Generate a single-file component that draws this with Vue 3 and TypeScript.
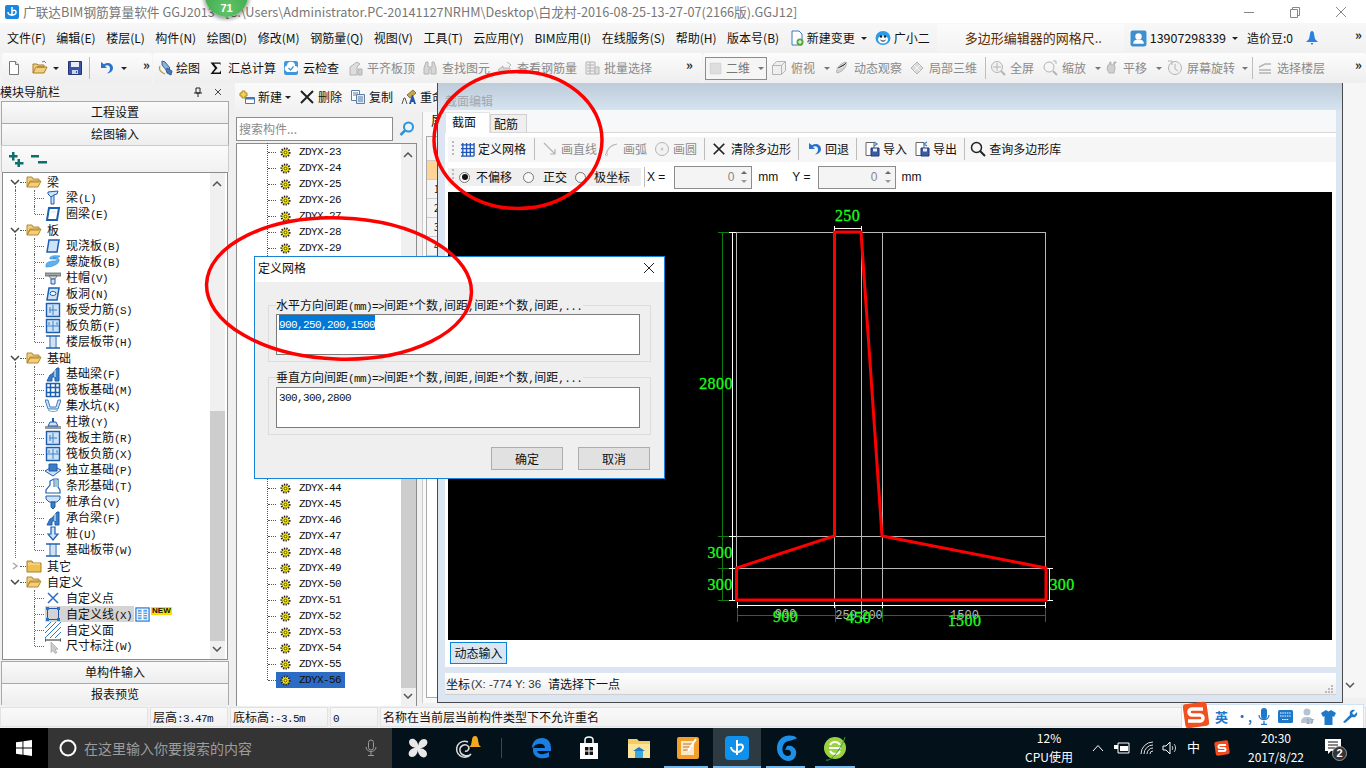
<script setup lang="ts">
import { h } from 'vue'

// icon markup on a 16x16 grid, kept as strings so the rows below stay data only
const B = '#1b5fb0'
const L = '#cfe2f7'
const G = '#b4b4b4'
const icons: Record<string, string> = {
  page: `<path d="M3.5 1.5h6l3 3v10h-9z" fill="#fff" stroke="#777"/><path d="M9.5 1.5v3h3" fill="#eee" stroke="#777"/>`,
  open: `<path d="M1 13V4h4l1 1h6v2H4L1 13h11l3-6H5" fill="#f2cf7a" stroke="#a87c2a"/><path d="M10 2l2-1 2 2" fill="none" stroke="#4a7fc0"/>`,
  save: `<path d="M1.5 1.5h13v13h-13z" fill="#3d55a8" stroke="#24346f"/><path d="M4 2h8v5H4z" fill="#e8ecf5"/><path d="M5 10h6v4H5z" fill="#cdd4e6"/><path d="M9 11h1v2H9z" fill="#3d55a8"/>`,
  undo: `<path d="M3 2v6h6L7 6c2-1.500 5-.5 5 2.500 0 2-1 3.500-3 5 4-.5 6-3 6-5.500C15 4 10 1.500 6 4.200z" fill="#2a74c8"/>`,
  draw: `<path d="M4 1l3 1 5 6-3 3-5-6z" fill="#8fb4dc" stroke="#35619a"/><path d="M9 8l5 3-1 4-4-2-1-3z" fill="#4d78b0" stroke="#35619a"/><path d="M2 6c-2 4 2 7 5 8" fill="none" stroke="#c39a3a" stroke-width="1.300"/>`,
  sigma: `<path d="M2.500 2.500h10v2.500l-1-1.200H6L9.500 8 5.500 12.500h6l1.500-2v3.500h-10.500L7 8.300z" fill="#111"/>`,
  cloud: `<rect x="1" y="1" width="14" height="14" rx="2" fill="#3f96dc"/><path d="M3 11a3 3 0 0 1 1-5.500A4 4 0 0 1 12 6a3 3 0 0 1 0 6H4z" fill="#fff"/><path d="M5.500 8l2 2 3-3.500" fill="none" stroke="#3f96dc" stroke-width="1.300"/>`,
  gAlign: `<path d="M3 15V7l7-5 3 2-3 3v8z" fill="#ddd" stroke="${G}"/><path d="M11 9h4v6h-4z" fill="#ccc" stroke="${G}"/>`,
  gFind: `<path d="M2 8l2-6h2v5h4V2h2l2 6v6h-5V9H7v5H2z" fill="#d6d6d6" stroke="${G}"/>`,
  gRebar: `<path d="M1 10l5-4v2h7v4H6v2z" fill="#d6d6d6" stroke="${G}"/><path d="M10 2l4 3-2 2" fill="none" stroke="${G}"/>`,
  gBatch: `<path d="M2 2h9v12H2z" fill="#eee" stroke="${G}"/><path d="M3 5h7M3 8h7M3 11h7M6 2v12" stroke="${G}"/><path d="M11 7h4v7h-4z" fill="#ddd" stroke="${G}"/>`,
  gSq: `<path d="M1.500 1.500h13v13h-13z" fill="#dedede" stroke="#cfcfcf"/>`,
  gBox: `<path d="M1.500 5.500l4-4h9v9l-4 4h-9zM1.500 5.500h9v9M10.500 5.500l4-4" fill="#efefef" stroke="${G}"/>`,
  gOrbit: `<path d="M3 13c-2-3 3-10 9-11 2 3-3 10-9 11z" fill="#d2d2d2" stroke="${G}"/><path d="M2 9c3 0 9-3 12-7" stroke="#fff"/>`,
  gLocal: `<path d="M2 8l6-6 6 6-6 6z" fill="#dcdcdc" stroke="${G}"/><path d="M5 5l6 6M8 2v0M11 5l-6 6" stroke="#f5f5f5"/>`,
  gFull: `<circle cx="7" cy="7" r="5.500" fill="#f2f2f2" stroke="${G}"/><path d="M7 3v8M3 7h8" stroke="${G}"/><path d="M11 11l4 4" stroke="${G}" stroke-width="2"/>`,
  gZoom: `<circle cx="7" cy="7" r="5" fill="#f6f6f6" stroke="${G}"/><path d="M11 11l4 4" stroke="${G}" stroke-width="2"/><path d="M11 1h3v3" fill="none" stroke="${G}"/>`,
  gPan: `<path d="M4 9l1-4h1l1-3h1v3h2l1-2 1 5-1 5H6z" fill="#d0d0d0" stroke="${G}"/><path d="M12 1v3M10.500 2.500h3" stroke="${G}"/>`,
  gRot: `<circle cx="8" cy="8" r="6.500" fill="#f1f1f1" stroke="${G}"/><path d="M8 4v5l3 2" fill="none" stroke="${G}"/><path d="M1 1h4v4" fill="none" stroke="${G}"/>`,
  gFloor: `<path d="M2 7l6-3h6M2 10h12M2 13h12" fill="none" stroke="${G}" stroke-width="1.500"/>`,
  gLine: `<path d="M2 2l11 11M13 8v5H8" fill="none" stroke="${G}" stroke-width="1.200"/>`,
  gArc: `<path d="M2 14C3 8 7 4 13 3" fill="none" stroke="${G}" stroke-width="1.200"/><circle cx="2.500" cy="13.500" r="1" fill="#fff" stroke="${G}"/>`,
  gCirc: `<circle cx="8" cy="8" r="6.500" fill="#f2f2f2" stroke="${G}"/><circle cx="8" cy="8" r="1.500" fill="#ccc"/>`,
  grid: `<path d="M3 1v14M7 1v14M11 1v14M15 1v14M1 3h14M1 7h14M1 11h14M1 15h14" stroke="#1f55b5" stroke-width="1.400"/>`,
  x: `<path d="M2 2l12 12M14 2L2 14" stroke="#222" stroke-width="2"/>`,
  imp: `<path d="M2 1.500h8v13H2z" fill="#fff" stroke="#666"/><path d="M7 7h8v8H7z" fill="#3a5ca8" stroke="#23396f"/><path d="M9 7.500h4v3H9z" fill="#e8ecf5"/><path d="M10 1l3 2-3 2" fill="none" stroke="#3a83c8" stroke-width="1.300"/>`,
  exp: `<path d="M2 1.500h8v13H2z" fill="#fff" stroke="#666"/><path d="M7 7h8v8H7z" fill="#3a5ca8" stroke="#23396f"/><path d="M9 7.500h4v3H9z" fill="#e8ecf5"/><path d="M13 1l-3 2 3 2" fill="none" stroke="#3a83c8" stroke-width="1.300"/>`,
  lens: `<circle cx="6.500" cy="6.500" r="5" fill="none" stroke="#222" stroke-width="1.500"/><path d="M10 10l5 5" stroke="#222" stroke-width="2"/>`,
  lensB: `<circle cx="9.500" cy="6" r="4.500" fill="#e8f4fc" stroke="#2f93d8" stroke-width="2"/><path d="M6 9.500L1.500 14" stroke="#2f93d8" stroke-width="2.500"/>`,
  add: `<path d="M3 2h3v2h2v3H6v2H3V7H1V4h2z" fill="#f3d25a" stroke="#b08d1e"/><path d="M6.500 8.500h9v6h-9z" fill="#fff" stroke="#4a78b5"/><path d="M6.500 8.500h9v2h-9z" fill="#4a78b5"/>`,
  copy: `<path d="M1.500 1.500h8v10h-8z" fill="#fff" stroke="#5d7fa8"/><path d="M6.500 5.500h8v9h-8z" fill="#dce8f6" stroke="#5d7fa8"/><path d="M3 4h5M3 6h3M8 8h5M8 10h5M8 12h5" stroke="#5d7fa8"/>`,
  rename: `<path d="M6 6l6-5 3 3-6 5z" fill="#c9a545" stroke="#8b7430"/><path d="M8 15l3-9h1l3 9h-2l-.5-2h-2l-.5 2z" fill="#2456b0"/><path d="M1 15l2-6h1l2 6" fill="none" stroke="#555"/>`,
  doc: `<path d="M3 1h7l3 3v11H3z" fill="#fff" stroke="#3b7cc2"/><circle cx="11" cy="12" r="3.500" fill="#5aa43a"/><path d="M11 10v4M9 12h4" stroke="#fff"/>`,
  bot: `<ellipse cx="8" cy="8" rx="7.500" ry="7" fill="#2a9be8"/><ellipse cx="8" cy="9.500" rx="5" ry="4" fill="#fff"/><circle cx="6" cy="6.500" r="1.200" fill="#123"/><circle cx="10" cy="6.500" r="1.200" fill="#123"/><path d="M5.500 10c1.500 1.500 3.500 1.500 5 0" fill="none" stroke="#123"/>`,
  user: `<rect x="0.500" y="0.500" width="15" height="15" rx="2" fill="#3f8fd0"/><circle cx="8" cy="6" r="3" fill="#fff"/><path d="M3 13c0-3 2-4 5-4s5 1 5 4z" fill="#fff"/>`,
  bell: `<path d="M8 1c1 0 2 1 2 3l1 5 3 3H2l3-3 1-5c0-2 1-3 2-3z" fill="#2a80e0"/><path d="M6.500 13h3l-1.500 2z" fill="#2a80e0"/>`,
  plus2: `<path d="M1 4h3V1h2.500v3h3v2.500h-3v3H4v-3H1zM7 11h2.500V8H12v3h3.500v2.500H12V16H9.500v-2.500H7z" fill="#0d6e6e"/>`,
  minus2: `<path d="M0 4h8v2.500H0zM7 10h9v2.500H7z" fill="#0d6e6e"/>`,
  fOpen: `<path d="M1 13V3h5l1 2h6v3H4L1 13l3-6h11l-3 6z" fill="#f3cd7a" stroke="#b08a35"/>`,
  fShut: `<path d="M1 14V3h5l1 2h8v9z" fill="#efc04e" stroke="#a88129"/><path d="M2 6h12" stroke="#fbe7ae"/>`,
  beam: `<path d="M3 2l10-1-1 3-3 1v9H6V7L3 4z" fill="${L}" stroke="${B}"/><path d="M6 7l3-2" stroke="${B}"/>`,
  ring: `<path d="M4 2h10l-2 12H2z" fill="#fff" stroke="${B}" stroke-width="2"/><path d="M4 6h7" stroke="${L}"/>`,
  slab: `<path d="M4 2h10l-2 12H2z" fill="${L}" stroke="${B}" stroke-width="1.500"/>`,
  spiral: `<path d="M1 11c0-3 5-4 8-4s4-2 2-2H5c-1-3 4-4 10-3-1 2-5 2-7 2 3 0 7 0 6 3-1 4-8 6-13 6z" fill="#5fb2ef" stroke="#2d89d6" stroke-width=".6"/>`,
  cap: `<path d="M0 3h16v3H0z" fill="#9aa" stroke="#555" stroke-width=".7"/><path d="M4 6h8l-2 3H6z" fill="#ddd" stroke="#555" stroke-width=".7"/><path d="M6 9h4v5H6z" fill="${L}" stroke="${B}"/>`,
  hole: `<path d="M4 2h10l-2 12H2z" fill="${L}" stroke="${B}" stroke-width="1.500"/><ellipse cx="8" cy="7.500" rx="3" ry="2" fill="#fff" stroke="${B}"/>`,
  bar1: `<path d="M1.500 1.500h13v13h-13z" fill="${L}" stroke="${B}" stroke-width="1.400"/><path d="M8 3v10M4 8h8M5 5v6" stroke="#3a83c8"/>`,
  bar2: `<path d="M1.500 1.500h13v13h-13z" fill="${L}" stroke="${B}" stroke-width="1.400"/><path d="M8 3v10M2 8h12M4 4v3M12 4v3" stroke="#3a83c8"/>`,
  strip: `<path d="M1 2h14M1 14h14" stroke="${B}" stroke-width="1.500"/><path d="M5 2v12M11 2v12" stroke="${B}"/><path d="M6 3h4v10H6z" fill="${L}"/>`,
  fbeam: `<path d="M2 15l3-6 2-1 5-6h2v13h-4v-4H7v4z" fill="#3b7cc2" stroke="${B}"/><path d="M10 4v7" stroke="#fff"/>`,
  raft: `<path d="M1.500 1.500h13v13h-13z" fill="#fff" stroke="${B}" stroke-width="1.500"/><path d="M2 5.500h12M2 10.500h12M5.500 2v12M10.500 2v12" stroke="${B}" stroke-width="1.500"/>`,
  pit: `<path d="M0 2h3l2 7h6l2-7h3l-3 9H3z" fill="${L}" stroke="${B}" stroke-width=".8"/><path d="M3 12c2 2 8 2 10 0" fill="none" stroke="#6aa"/>`,
  pier: `<path d="M0 12h16v3H0z" fill="#999"/><path d="M5 8h6l2 4H3z" fill="${L}" stroke="${B}"/><path d="M7 4h2v4H7z" fill="${B}"/>`,
  iso: `<path d="M0 9l8-5 8 4-8 6z" fill="${L}" stroke="${B}"/><path d="M4 2h8v7H4z" fill="#3b7cc2" stroke="${B}"/>`,
  tri: `<path d="M1 15V12l4-5V3l4-2 4 0v8l2 3v3z" fill="#fff" stroke="${B}" stroke-width="1.200"/><path d="M9 2v7" stroke="${B}"/><path d="M10 2h3v7h-3z" fill="#9cc"/>`,
  pcap: `<path d="M1 2h14v3l-3 3H4L1 5z" fill="${L}" stroke="${B}"/><path d="M6 8h4v5l-2 2-2-2z" fill="#3b7cc2" stroke="${B}"/>`,
  pile: `<path d="M6 1h4v7h3l-5 6-5-6h3z" fill="${L}" stroke="${B}" stroke-width="1.200"/>`,
  cross: `<path d="M3 3l10 10M13 3L3 13" stroke="#2d6cc0" stroke-width="1.500"/>`,
  line: `<path d="M2.500 2.500h11v11h-11z" fill="none" stroke="#1f55b5"/><path d="M1 1h3v3H1zM12 1h3v3h-3zM1 12h3v3H1zM12 12h3v3h-3z" fill="#2a74c8"/>`,
  hatch: `<path d="M0 6l6-6M0 11L11 0M0 16L16 0M5 16L16 5M10 16l6-6" stroke="#2d7ac8"/>`,
  table: `<rect x="1" y="1" width="14" height="14" fill="#fff" stroke="#1f78d8" stroke-width="1.300"/><path d="M3 3h4v10H3zM9 3h4v10H9z" fill="#5a9fe6"/><path d="M3 5.500h4M3 8h4M3 10.500h4M9 5.500h4M9 8h4M9 10.500h4" stroke="#fff"/>`,
  dim: `<path d="M0 2h16M0 0v4M16 0v4" stroke="#222"/><path d="M6 4l7 7-3 .5 2 3-2 1-2-3-2 2z" fill="#ccc" stroke="#999" stroke-width=".6"/>`,
  gear: `<circle cx="8" cy="8" r="5" fill="#ffee10" stroke="#222" stroke-width="2.500" stroke-dasharray="1.600 1.400"/><circle cx="8" cy="8" r="1.800" fill="none" stroke="#333"/>`,
}

const Ico = (p: { n: string; s?: number }) =>
  h('svg', { width: p.s ?? 16, height: p.s ?? 16, viewBox: '0 0 16 16', innerHTML: icons[p.n] })

// SimSun style text: half width latin next to 12px hanzi
const Mix = (p: { t: string }) =>
  p.t
    .split(/([\x20-\x7e]+)/)
    .filter(Boolean)
    .map((s) => (/^[\x20-\x7e]/.test(s) ? h('span', { class: 'lat' }, s) : s))

const menus = ['文件(F)', '编辑(E)', '楼层(L)', '构件(N)', '绘图(D)', '修改(M)', '钢筋量(Q)', '视图(V)', '工具(T)', '云应用(Y)', 'BIM应用(I)', '在线服务(S)', '帮助(H)', '版本号(B)']

const toolsA = [
  { i: 'gAlign', t: '平齐板顶' },
  { i: 'gFind', t: '查找图元' },
  { i: 'gRebar', t: '查看钢筋量' },
  { i: 'gBatch', t: '批量选择' },
]

const toolsB = [
  { i: 'gFull', t: '全屏', k: '' },
  { i: 'gZoom', t: '缩放', c: true, k: 'tz' },
  { i: 'gPan', t: '平移', c: true, k: 'tp' },
  { i: 'gRot', t: '屏幕旋转', c: true, k: 'tr' },
]

type Row = { g?: boolean; shut?: boolean; t: string; i?: string; end?: boolean; off?: boolean; sel?: boolean }
const rows: Row[] = [
  { g: true, t: '梁' },
  { t: '梁(L)', i: 'beam' },
  { t: '圈梁(E)', i: 'ring', end: true },
  { g: true, t: '板' },
  { t: '现浇板(B)', i: 'slab' },
  { t: '螺旋板(B)', i: 'spiral' },
  { t: '柱帽(V)', i: 'cap' },
  { t: '板洞(N)', i: 'hole' },
  { t: '板受力筋(S)', i: 'bar1' },
  { t: '板负筋(F)', i: 'bar2' },
  { t: '楼层板带(H)', i: 'strip', end: true },
  { g: true, t: '基础' },
  { t: '基础梁(F)', i: 'fbeam' },
  { t: '筏板基础(M)', i: 'raft' },
  { t: '集水坑(K)', i: 'pit' },
  { t: '柱墩(Y)', i: 'pier' },
  { t: '筏板主筋(R)', i: 'bar1' },
  { t: '筏板负筋(X)', i: 'bar2' },
  { t: '独立基础(P)', i: 'iso' },
  { t: '条形基础(T)', i: 'tri' },
  { t: '桩承台(V)', i: 'pcap' },
  { t: '承台梁(F)', i: 'fbeam' },
  { t: '桩(U)', i: 'pile' },
  { t: '基础板带(W)', i: 'strip', end: true },
  { g: true, shut: true, t: '其它', off: true },
  { g: true, t: '自定义', off: true },
  { t: '自定义点', i: 'cross', off: true },
  { t: '自定义线(X)', i: 'line', off: true, sel: true },
  { t: '自定义面', i: 'hatch', off: true },
  { t: '尺寸标注(W)', i: 'dim', off: true, end: true },
]

const parts = Array.from({ length: 34 }, (_, k) => 'ZDYX-' + (k + 23))

const dims = [
  { x: 847.5, y: 221, t: '250' },
  { x: 716, y: 389, t: '2800' },
  { x: 720, y: 558, t: '300' },
  { x: 720, y: 590, t: '300' },
  { x: 1062, y: 590, t: '300' },
  { x: 785.5, y: 622, t: '900' },
  { x: 858.5, y: 623, t: '450' },
  { x: 964.5, y: 626, t: '1500' },
]
const soft = [
  { x: 785.5, y: 618, t: '900' },
  { x: 846, y: 619, t: '250' },
  { x: 872, y: 619, t: '200' },
  { x: 964.5, y: 619, t: '1500' },
]
</script>

<template>
  <div class="app">
    <header class="title">
      <svg class="logo" width="14" height="14" viewBox="0 0 14 14"><rect width="14" height="14" rx="2" fill="#1a86e0" /><path d="M7 2v9M3 7c0 2 2 3 4 3s4-1 4-3-2-2-3-1" fill="none" stroke="#fff" stroke-width="1.500" /></svg>
      <span class="title-text">广联达BIM钢筋算量软件 GGJ2013 - [C:\Users\Administrator.PC-20141127NRHM\Desktop\白龙村-2016-08-25-13-27-07(2166版).GGJ12]</span>
      <div class="win-btns">
        <svg width="12" height="12" viewBox="0 0 12 12"><path d="M1 6.500h10" stroke="#888" /></svg>
        <svg width="12" height="12" viewBox="0 0 12 12"><path d="M1.500 3.500h7v8h-7zM3.500 3.500v-2h7v8h-2" fill="none" stroke="#888" /></svg>
        <svg width="12" height="12" viewBox="0 0 12 12"><path d="M1 1l10 10M11 1L1 11" stroke="#888" /></svg>
      </div>
    </header>

    <nav class="menu">
      <span v-for="m in menus" :key="m" class="menu-item">{{ m }}</span>
      <Ico class="m-doc" n="doc" />
      <span class="m-change">新建变更</span><i class="caret m-caret" />
      <Ico class="m-bot" n="bot" />
      <span class="m-helper">广小二</span>
      <div class="ask">多边形编辑器的网格尺..</div>
      <Ico class="m-user" n="user" :s="17" />
      <span class="m-phone">13907298339</span><i class="caret m-caret2" />
      <span class="m-bean">造价豆:0</span>
      <Ico class="m-bell" n="bell" />
      <span class="more m-more">»</span>
    </nav>

    <div class="tools">
      <div class="seg seg-a">
        <Ico n="page" /><Ico class="ml10" n="open" /><i class="caret ml5" /><Ico class="ml8" n="save" />
        <i class="vsep ml6" /><Ico class="ml8" n="undo" /><i class="caret ml7" />
        <span class="more ml16">»</span>
      </div>
      <div class="seg seg-b">
        <div class="tool t-draw"><Ico n="draw" />绘图</div>
        <div class="tool t-sum"><Ico n="sigma" />汇总计算</div>
        <div class="tool"><Ico n="cloud" />云检查</div>
        <div v-for="a in toolsA" :key="a.t" class="tool off"><Ico :n="a.i" />{{ a.t }}</div>
        <span class="more t-more">»</span>
      </div>
      <div class="seg seg-c">
        <div class="view-box"><Ico n="gSq" :s="13" />二维<i class="caret gray v-caret" /></div>
        <div class="tool off"><Ico n="gBox" />俯视<i class="caret gray" /></div>
        <div class="tool off t-orbit"><Ico n="gOrbit" />动态观察</div>
        <div class="tool off"><Ico n="gLocal" />局部三维</div>
        <i class="vsep" />
        <div v-for="b in toolsB" :key="b.t" class="tool off" :class="b.k"><Ico :n="b.i" />{{ b.t }}<i v-if="b.c" class="caret gray" /></div>
        <i class="vsep" />
        <div class="tool off"><Ico n="gFloor" />选择楼层</div>
        <span class="more c-more">»</span>
      </div>
    </div>

    <main class="main">
      <aside class="nav">
        <div class="nav-head">
          <span class="nav-title">模块导航栏</span>
          <svg width="10" height="10" viewBox="0 0 10 10" class="pin"><path d="M3 1h4v5H3zM1 6h8M5 6v4" fill="none" stroke="#222" /></svg>
          <svg width="10" height="10" viewBox="0 0 10 10"><path d="M2 2l6 6M8 2L2 8" stroke="#444" /></svg>
        </div>
        <div class="nav-btn">工程设置</div>
        <div class="nav-btn">绘图输入</div>
        <div class="tree-bar"><Ico n="plus2" /><Ico n="minus2" /></div>
        <div class="tree-box">
          <div class="tree">
            <div v-for="r in rows" :key="r.t" class="row" :class="{ grp: r.g, kid: !r.g, sel: r.sel, last: r.end }">
              <i v-if="!r.off" class="guide0" />
              <template v-if="r.g">
                <svg class="chev" width="10" height="8" viewBox="0 0 10 8">
                  <path :d="r.shut ? 'M3 1l4 3-4 3' : 'M1 2l4 4 4-4'" fill="none" :stroke="r.shut ? '#aaa' : '#444'" stroke-width="1.500" />
                </svg>
                <i class="dash" />
                <Ico :n="r.shut ? 'fShut' : 'fOpen'" />
                <span class="g-label">{{ r.t }}</span>
              </template>
              <template v-else>
                <i class="guide1" />
                <i class="dash1" />
                <Ico class="r-ico" :n="r.i!" />
                <span class="k-label"><Mix :t="r.t" /></span>
                <template v-if="r.sel">
                  <Ico class="r-table" n="table" :s="15" />
                  <span class="new">NEW</span>
                </template>
              </template>
            </div>
          </div>
          <div class="sbar">
            <svg class="s-up" width="10" height="6" viewBox="0 0 10 6"><path d="M1 5l4-4 4 4" fill="none" stroke="#555" stroke-width="1.500" /></svg>
            <div class="thumb" />
            <svg class="s-dn" width="10" height="6" viewBox="0 0 10 6"><path d="M1 1l4 4 4-4" fill="none" stroke="#555" stroke-width="1.500" /></svg>
          </div>
        </div>
        <div class="nav-btn b1">单构件输入</div>
        <div class="nav-btn">报表预览</div>
      </aside>

      <section class="list">
        <div class="list-bar">
          <Ico n="add" /><span class="lb-t">新建</span><i class="caret" />
          <Ico class="lb-x" n="x" /><span class="lb-t">删除</span>
          <Ico class="lb-i" n="copy" /><span class="lb-t">复制</span>
          <Ico class="lb-i" n="rename" /><span class="lb-t">重命名</span>
        </div>
        <div class="search">
          <div class="search-box">搜索构件...</div>
          <Ico class="search-ico" n="lensB" />
        </div>
        <div class="list-box">
          <div class="parts">
            <div v-for="(p, k) in parts" :key="p" class="part" :class="{ end: k === parts.length - 1 }">
              <i class="p-v" /><i class="p-h" />
              <div class="p-in" :class="{ on: k === parts.length - 1 }">
                <Ico n="gear" :s="13" /><span class="p-t">{{ p }}</span>
              </div>
            </div>
          </div>
          <div class="sbar sbar2">
            <svg class="s-up" width="10" height="6" viewBox="0 0 10 6"><path d="M1 5l4-4 4 4" fill="none" stroke="#555" stroke-width="1.500" /></svg>
            <div class="thumb" />
            <svg class="s-dn" width="10" height="6" viewBox="0 0 10 6"><path d="M1 1l4 4 4-4" fill="none" stroke="#555" stroke-width="1.500" /></svg>
          </div>
        </div>
      </section>

      <section class="props">
        <div class="props-tab">属</div>
        <div class="props-box">
          <div class="pc head" />
          <div class="pc on" />
          <div class="pc">1</div>
          <div class="pc">2</div>
          <div class="pc">3</div>
          <div class="pc">4</div>
        </div>
      </section>

      <section class="win">
        <div class="win-title">截面编辑</div>
        <div class="tabs">
          <div class="tab active">截面</div>
          <div class="tab">配筋</div>
        </div>
        <div class="body">
          <div class="bar1">
            <i class="grip" />
            <div class="b1-i first"><Ico n="grid" :s="15" /><span>定义网格</span></div>
            <i class="vsep" />
            <div class="b1-i off"><Ico n="gLine" /><span>画直线</span></div>
            <div class="b1-i off"><Ico n="gArc" /><span>画弧</span></div>
            <div class="b1-i off"><Ico n="gCirc" /><span>画圆</span></div>
            <i class="vsep" />
            <div class="b1-i wide"><Ico n="x" :s="14" /><span>清除多边形</span></div>
            <i class="vsep" />
            <div class="b1-i"><Ico n="undo" /><span>回退</span></div>
            <i class="vsep" />
            <div class="b1-i"><Ico n="imp" /><span>导入</span></div>
            <div class="b1-i"><Ico n="exp" /><span>导出</span></div>
            <i class="vsep" />
            <div class="b1-i lens"><Ico n="lens" /><span>查询多边形库</span></div>
          </div>
          <div class="bar2">
            <div class="modes">
              <i class="grip g2" />
              <i class="radio on" /><span class="m1">不偏移</span>
              <i class="radio" /><span class="m2">正交</span>
              <i class="radio" /><span class="m3">极坐标</span>
            </div>
            <i class="vsep v2" />
            <span class="lab xl">X =</span>
            <div class="spin sx">0<span class="arrows"><i class="up" /><i class="dn" /></span></div>
            <span class="lab mm">mm</span>
            <span class="lab yl">Y =</span>
            <div class="spin sy">0<span class="arrows"><i class="up" /><i class="dn" /></span></div>
            <span class="lab mm">mm</span>
          </div>
          <svg class="canvas" width="884" height="448" viewBox="448 192 884 448">
            <g shape-rendering="crispEdges" fill="none">
              <path d="M736.500 232V600M834.500 232V600M861.500 232V622M882.500 232V600M1045.500 232V600M736 232.500H1046M736 536.500H1046M736 568.500H1046M736 600.500H1046" stroke="#b9b9b9" />
              <path d="M722.500 232V600M737 606V622M835 606V622M882.500 606V622M1045.500 606V622M737 615.500H1046M718 232.500h14M718 536.500h14M718 568.500h14M718 600.500h14" stroke="#0f7a0f" />
              <path d="M732.500 232V600M729 232.500h7M729 536.500h7M729 568.500h7M729 600.500h7M737 605.500H1046M737 602v6M834.500 602v6M882.500 602v6M1045.500 602v6M834.500 228.500H861M834.500 226v5M861.500 226v5M1049.500 568V600M1046 568.500h7M1046 600.500h7" stroke="#fff" />
            </g>
            <text v-for="s in soft" :key="s.x" :x="s.x" :y="s.y" class="soft" text-anchor="middle">{{ s.t }}</text>
            <text v-for="d in dims" :key="d.x + d.y" :x="d.x" :y="d.y" class="dim" text-anchor="middle">{{ d.t }}</text>
            <path d="M834.500 232H861L882 536L1046 568V600H736.500V568L834.500 536Z" fill="none" stroke="#ff0000" stroke-width="3" />
          </svg>
          <div class="dyn-row"><div class="dyn">动态输入</div></div>
        </div>
        <div class="coord">
          <span class="c-a">坐标</span>
          <span class="c-b">(X: -774 Y: 36</span>
          <span class="c-c">请选择下一点</span>
          <svg class="c-grip" width="10" height="10" viewBox="0 0 10 10"><path d="M7 1h2v2H7zM4 4h2v2H4zM7 4h2v2H7zM1 7h2v2H1zM4 7h2v2H4zM7 7h2v2H7z" fill="#bbb" /></svg>
        </div>
      </section>

      <aside class="edge">
        <svg width="10" height="6" viewBox="0 0 10 6"><path d="M1 1l4 4 4-4" fill="none" stroke="#555" stroke-width="1.500" /></svg>
      </aside>
    </main>

    <footer class="status">
      <div class="st s0" />
      <div class="st s1"><Mix t="层高:3.47m" /></div>
      <div class="st s2"><Mix t="底标高:-3.5m" /></div>
      <div class="st s3"><Mix t="0" /></div>
      <div class="st s4">名称在当前层当前构件类型下不允许重名</div>
    </footer>

    <div class="taskbar">
      <div class="start">
        <svg width="16" height="16" viewBox="0 0 16 16"><path d="M0 2.300l6.500-.9v6.200H0zM7.400 1.300L16 0v7.600H7.400zM0 8.500h6.500v6.200L0 13.800zM7.400 8.500H16V16l-8.600-1.200z" fill="#fff" /></svg>
      </div>
      <div class="tsearch">
        <svg width="18" height="18" viewBox="0 0 18 18"><circle cx="9" cy="9" r="7.500" fill="none" stroke="#fff" stroke-width="2" /></svg>
        <span class="ts-t">在这里输入你要搜索的内容</span>
        <svg class="ts-m" width="12" height="18" viewBox="0 0 12 18"><rect x="3.500" y="1" width="5" height="10" rx="2.500" fill="none" stroke="#999" /><path d="M1 8c0 6 10 6 10 0M6 13v3M3 16.500h6" fill="none" stroke="#999" /></svg>
      </div>
      <div class="apps">
        <div class="app-i a-wheel">
          <svg width="22" height="22" viewBox="0 0 22 22"><path d="M11 11C5 11 2 8 2 5s3-4 5-3 5 4 4 9zM11 11c0-6 3-9 6-9s4 3 3 5-4 5-9 4zM11 11c6 0 9 3 9 6s-3 4-5 3-5-4-4-9zM11 11c0 6-3 9-6 9s-4-3-3-5 4-5 9-4z" fill="#e8e8e8" /></svg>
        </div>
        <div class="app-i a-spiral">
          <svg width="30" height="26" viewBox="0 0 30 26"><path d="M15 7a8 8 0 1 0 3 12c-3 3-10 2-11-3s5-8 8-5c2 2 0 6-3 5" fill="none" stroke="#ddd" stroke-width="1.500" /><path d="M22 1c2 0 3 2 3 4l1 5 2 2H16l2-2 1-5c0-2 1-4 3-4z" fill="#f2a91e" /></svg>
        </div>
        <i class="t-sep" />
        <div class="app-i a-edge">
          <svg width="22" height="22" viewBox="0 0 22 22"><path d="M2 11C2 5 6 1 12 1s9 4 9 11v2H7c1 4 7 4 12 1v5c-7 3-16 1-16-7 0-3 1-5 3-6-1 1-2 2-2 4h11c0-5-8-6-13 0z" fill="#1a7fe0" /></svg>
        </div>
        <div class="app-i a-store">
          <svg width="20" height="24" viewBox="0 0 20 24"><path d="M1 7h18v16H1z" fill="#fff" /><path d="M6 7V4c0-4 8-4 8 0v3" fill="none" stroke="#fff" stroke-width="1.500" /><path d="M6 11h3.500v3.500H6zM10.500 11H14v3.500h-3.500zM6 15.500h3.500V19H6zM10.500 15.500H14V19h-3.500z" fill="#111" /></svg>
        </div>
        <div class="app-i a-files">
          <svg width="22" height="20" viewBox="0 0 22 20"><path d="M0 1h9l2 2h11v17H0z" fill="#f3cc63" /><path d="M0 6h22v14H0z" fill="#fbe59a" /><path d="M7 13h8v7H7z" fill="#39a7e0" /><path d="M5 13l6-4 6 4z" fill="#1a7fc8" /></svg>
        </div>
        <div class="app-i a-notes">
          <svg width="24" height="24" viewBox="0 0 24 24"><rect x="1" y="1" width="22" height="22" rx="2" fill="#f1a02c" /><path d="M5 5h13v14H5z" fill="#fbe8c8" /><path d="M7 8h9M7 11h9M7 14h6" stroke="#c0702a" /><path d="M20 3l-8 12" stroke="#fff" stroke-width="2" /></svg>
        </div>
        <div class="app-i a-main">
          <svg width="24" height="24" viewBox="0 0 24 24"><rect width="24" height="24" rx="4" fill="#0f90ea" /><path d="M12 4v15M6 11c0 3 3 5 6 5s6-2 6-5-3-3-5-2" fill="none" stroke="#fff" stroke-width="2" /></svg>
        </div>
        <div class="app-i a-g">
          <svg width="26" height="28" viewBox="0 0 26 28"><path d="M25 4c-5-4-14-3-18 3-5 8 0 19 9 20 6 0 9-5 8-10-1-4-5-6-9-5l-2 4c3-1 6 0 6 3s-4 4-6 2c-4-3-3-11 1-13 3-2 7-1 11-4z" fill="#1c8fe8" /></svg>
        </div>
        <div class="app-i a-ie">
          <svg width="24" height="28" viewBox="0 0 24 28"><circle cx="12" cy="14" r="11" fill="#9ad13e" /><path d="M6 14h12M7 11c2-4 8-4 10 0M7 17c2 4 8 4 10 0" fill="none" stroke="#fff" stroke-width="2" /><path d="M3 26c5 2 16-12 19-23" fill="none" stroke="#2e9e3c" /></svg>
        </div>
      </div>
      <div class="tray">
        <div class="cpu"><span>12%</span><span>CPU使用</span></div>
        <svg class="tr-up" width="12" height="8" viewBox="0 0 12 8"><path d="M1 7l5-5.500L11 7" fill="none" stroke="#fff" /></svg>
        <svg class="tr-bat" width="16" height="12" viewBox="0 0 16 12"><path d="M4 1h11v10H4z" fill="none" stroke="#fff" /><path d="M6 4h8v5H6z" fill="#fff" /><path d="M0 3h4v4H0z" fill="#fff" /></svg>
        <svg class="tr-wifi" width="14" height="14" viewBox="0 0 14 14"><path d="M1 13A12 12 0 0 1 13 1M4 13a9 9 0 0 1 9-9M7 13a6 6 0 0 1 6-6M10 13a3 3 0 0 1 3-3" fill="none" stroke="#ddd" /></svg>
        <svg class="tr-vol" width="16" height="14" viewBox="0 0 16 14"><path d="M1 5h3l4-4v12L4 9H1z" fill="none" stroke="#fff" /><path d="M10 5c1 1 1 3 0 4M12 3c2 2 2 6 0 8" fill="none" stroke="#ccc" /></svg>
        <span class="tr-zh">中</span>
        <svg class="tr-s" width="16" height="16" viewBox="0 0 16 16"><rect x="1" y="1" width="14" height="14" rx="2" fill="#f04c1e" transform="rotate(-8 8 8)" /><path d="M12 5H6c-2 0-2 3 0 3h4c2 0 2 3 0 3H4" fill="none" stroke="#fff" stroke-width="2" /></svg>
        <div class="clock"><span>20:30</span><span>2017/8/22</span></div>
        <div class="notif">
          <svg width="16" height="16" viewBox="0 0 16 16"><path d="M0 0h16v12H6l-3 3v-3H0z" fill="#fff" /><path d="M3 3h10M3 6h10M3 9h7" stroke="#111" /></svg>
          <span class="badge">2</span>
        </div>
      </div>
    </div>

    <!-- things floating over the window -->
    <div class="ime">
      <svg class="ime-s" width="28" height="28" viewBox="0 0 28 28"><rect x="2" y="2" width="24" height="24" rx="3" fill="#f2501e" transform="rotate(-8 14 14)" /><path d="M21 8H10c-4 0-4 6 0 6h8c4 0 4 6 0 6H6" fill="none" stroke="#fff" stroke-width="3.500" /></svg>
      <span class="ime-en">英</span>
      <span class="ime-p">•,</span>
      <svg width="12" height="17" viewBox="0 0 12 17"><rect x="3" y="0" width="6" height="11" rx="3" fill="#1e78c8" /><path d="M1 7c0 6 10 6 10 0M6 13v3M3 16.500h6" fill="none" stroke="#1e78c8" stroke-width="1.300" /></svg>
      <svg width="15" height="13" viewBox="0 0 15 13"><rect width="15" height="13" rx="1.500" fill="#1e78c8" /><path d="M2 3h11M2 6h11M4 9.500h7" stroke="#fff" stroke-dasharray="1.500 .8" /></svg>
      <svg width="14" height="17" viewBox="0 0 14 17"><circle cx="6" cy="4" r="3.500" fill="#b5c4d2" /><path d="M0 15c0-5 2-6 6-6s6 1 6 6z" fill="#b5c4d2" /><text x="5" y="16" class="ime-17">17</text></svg>
      <svg class="ime-tee" width="15" height="16" viewBox="0 0 15 16"><path d="M5 1l2.500 1.500L10 1l5 3-2 4-1.500-1v9h-8V7L2 8 0 4z" fill="#1e78c8" /></svg>
      <svg class="ime-key" width="16" height="16" viewBox="0 0 16 16"><path d="M1 13L8 6c-1-3 1-6 5-5l-3 3 2 2 3-3c1 4-2 6-5 5l-7 6z" fill="#1e78c8" /></svg>
    </div>

    <div class="badge71"><span>71</span></div>

    <div class="dialog">
      <div class="d-title">
        <span>定义网格</span>
        <svg width="12" height="12" viewBox="0 0 12 12"><path d="M1 1l10 10M11 1L1 11" stroke="#222" /></svg>
      </div>
      <div class="d-body">
        <fieldset class="fs">
          <legend><Mix t="水平方向间距(mm)=>间距*个数,间距,间距*个数,间距,..." /></legend>
          <div class="ta"><span class="hl"><Mix t="900,250,200,1500" /></span></div>
        </fieldset>
        <fieldset class="fs fs-two">
          <legend><Mix t="垂直方向间距(mm)=>间距*个数,间距,间距*个数,间距,..." /></legend>
          <div class="ta"><Mix t="300,300,2800" /></div>
        </fieldset>
        <div class="d-btns">
          <div class="d-btn">确定</div>
          <div class="d-btn">取消</div>
        </div>
      </div>
    </div>

    <svg class="marks" width="1366" height="768" viewBox="0 0 1366 768">
      <ellipse cx="518" cy="140" rx="84" ry="68.500" fill="none" stroke="#f00" stroke-width="3.500" />
      <ellipse cx="339" cy="288.500" rx="132.500" ry="70.500" fill="none" stroke="#f00" stroke-width="3.500" transform="rotate(2 339 288.500)" />
    </svg>
  </div>
</template>

<style scoped>
.app {
  position: relative;
  width: 1366px;
  height: 768px;
  overflow: hidden;
  display: flex;
  flex-direction: column;
  background: #f0f0f0;
  color: #111;
  font: 12px/16px "Noto Sans CJK SC", sans-serif;
}
i { display: block; font-style: normal; flex: none; }
svg { display: block; flex: none; }

.title {
  height: 23px;
  flex: none;
  display: flex;
  align-items: center;
  padding-left: 5px;
  background: #fff;
  color: #777;
  font-size: 12.7px;
  white-space: nowrap;
}
.logo { margin-right: 4px; }
.win-btns { margin-left: auto; display: flex; gap: 34px; padding-right: 19px; }

.menu {
  height: 30px;
  flex: none;
  display: flex;
  align-items: center;
  gap: 10.6px;
  padding-left: 7px;
  background: linear-gradient(#f7f7f7, #f1f1f1);
  white-space: nowrap;
}
.m-doc { margin-left: -1px; }
.m-change { margin-left: -8.6px; }
.caret { width: 0; height: 0; border: 3px solid transparent; border-top: 3px solid #222; border-bottom: 0; }
.caret.gray { border-top-color: #777; }
.m-caret { margin-left: -4.6px; }
.m-bot { margin-left: -2.6px; }
.m-helper { margin-left: -7.6px; }
.ask {
  width: 187px;
  height: 28px;
  line-height: 28px;
  margin-left: -3.6px;
  padding-left: 28px;
  box-sizing: border-box;
  background: linear-gradient(#fbfbfb, #f3f3f3);
  border-radius: 3px;
  color: #5a2c00;
  font-size: 13px;
}
.m-user { margin-left: -4.6px; }
.m-phone { margin-left: -7.6px; font-size: 12.5px; }
.m-caret2 { margin-left: -4.6px; }
.m-bean { margin-left: -1.6px; }
.more { font-size: 13px; line-height: 12px; font-weight: 700; color: #222; align-self: flex-start; margin-top: 6px; }
.m-more { margin-left: auto; margin-right: 4px; }

.tools {
  height: 30px;
  flex: none;
  display: flex;
  gap: 1px;
  background: #f3f3f3;
  padding-left: 2px;
  white-space: nowrap;
}
.seg {
  display: flex;
  align-items: center;
  background: linear-gradient(#fcfcfc, #eeeeee);
  border-radius: 3px;
}
.seg-a { width: 150px; padding-left: 4px; box-sizing: border-box; }
.seg-b { width: 549px; padding-left: 5px; box-sizing: border-box; gap: 7px; }
.seg-c { flex: 1; padding-left: 2px; gap: 4px; }
.ml5 { margin-left: 5px; }
.ml6 { margin-left: 6px; }
.ml7 { margin-left: 7px; }
.ml8 { margin-left: 8px; }
.ml10 { margin-left: 10px; }
.ml16 { margin-left: 16px; }
.vsep { width: 1px; height: 22px; background: #bdbdbd; }
.tool { display: flex; align-items: center; gap: 4px; }
.tool.off { color: #8a8a8a; }
.t-draw { gap: 2px; }
.t-sum { margin-left: 1px; }
.seg-b .off:nth-of-type(4) { margin-left: 1px; }
.t-more { margin-left: 27px; }
.view-box {
  width: 62px;
  height: 23px;
  box-sizing: border-box;
  border: 1px solid #8c8c8c;
  display: flex;
  align-items: center;
  gap: 4px;
  padding-left: 3px;
  color: #777;
  background: #f5f5f5;
}
.v-caret { margin-left: 4px; }
.seg-c .tool { gap: 4px; margin-right: 4px; }
.seg-c .tool .caret { margin-left: 5px; }
.seg-c .t-orbit { margin-left: -4px; margin-right: 3px; }
.seg-c .tz { margin-right: -2px; }
.seg-c .tp { margin-right: 1px; }
.seg-c .tr { margin-right: 0; }
.seg-c .tr .caret { margin-left: 3px; }
.c-more { margin-left: auto; margin-right: 4px; }

.main { flex: 1; min-height: 0; display: flex; background: #f0f0f0; }

.nav { width: 230px; flex: none; padding-top: 1px; box-sizing: border-box; }
.nav-head { height: 15px; display: flex; align-items: center; padding-right: 7px; }
.nav-title { margin-right: auto; }
.pin { margin-right: 10px; }
.nav-btn {
  height: 22px;
  margin: 0 1px;
  box-sizing: border-box;
  border: 1px solid #a9a9a9;
  border-bottom: 0;
  background: linear-gradient(#fafafa, #ededed);
  text-align: center;
  line-height: 19px;
}
.nav-head + .nav-btn { margin-top: 2px; }
.tree-bar {
  height: 27px;
  margin: 0 1px;
  display: flex;
  align-items: center;
  gap: 7px;
  padding-left: 6px;
  background: linear-gradient(#fbfbfb, #f1f1f1);
  border: 1px solid #ccc;
  border-width: 1px 1px 0;
  box-sizing: border-box;
}
.tree-box {
  height: 488px;
  margin: 0 2px 1px 2px;
  box-sizing: border-box;
  border: 1px solid #8c8c8c;
  background: #fff;
  display: flex;
}
.tree { flex: 1; padding-top: 1px; }
.row { position: relative; height: 16px; display: flex; align-items: center; }
.grp { padding-left: 7px; }
.chev { width: 10px; }
.dash { width: 6px; height: 0; border-top: 1px dotted #555; }
.g-label { margin-left: 5px; }
.guide0 { position: absolute; left: 12px; top: 0; bottom: 0; border-left: 1px dotted #666; }
.grp .guide0 { top: 12px; }
.guide1 { position: absolute; left: 31px; top: 0; bottom: 0; border-left: 1px dotted #666; }
.last .guide1 { bottom: 8px; }
.dash1 { position: absolute; left: 32px; width: 9px; top: 8px; border-top: 1px dotted #666; }
.r-ico { margin-left: 42px; }
.k-label { margin-left: 5px; white-space: nowrap; }
.sel .k-label { background: #d4d4d4; margin-left: 0; padding-left: 5px; padding-right: 2px; height: 16px; }
.sel .r-ico { background: #d4d4d4; }
.r-table { margin-left: 1px; }
.new {
  height: 8px;
  margin: -7px 0 0 1px;
  padding: 0 1px;
  background: #ffdd00;
  font: 700 8px/8px "Liberation Sans", sans-serif;
  color: #111;
}
.sbar {
  width: 15px;
  margin-right: 2px;
  background: #f0f0f0;
  position: relative;
  flex: none;
}
.s-up { position: absolute; left: 2px; top: 8px; }
.s-dn { position: absolute; left: 2px; bottom: 7px; }
.thumb { position: absolute; left: 0; right: 0; top: 238px; bottom: 18px; background: #cdcdcd; }

.list { width: 182px; margin-left: 5px; flex: none; display: flex; flex-direction: column; }
.list-bar { height: 31px; padding-bottom: 3px; box-sizing: border-box; flex: none; display: flex; align-items: center; padding-left: 4px; gap: 3px; white-space: nowrap; margin-right: -20px; background: linear-gradient(#fbfbfb, #f0f0f0); }
.lb-x { margin-left: 5px; }
.lb-i { margin-left: 5px; }
.search { height: 29px; flex: none; display: flex; align-items: center; padding-left: 1px; }
.search-box { width: 157px; height: 24px; box-sizing: border-box; border: 1px solid #8c8c8c; background: #fff; color: #8a8a8a; line-height: 22px; padding-left: 2px; }
.search-ico { margin-left: 6px; }
.list-box { height: 563px; margin-left: 1px; box-sizing: border-box; border: 1px solid #8c8c8c; border-bottom: 0; background: #fff; display: flex; }
.parts { flex: 1; }
.part { position: relative; height: 16px; display: flex; align-items: center; padding-left: 39px; }
.p-v { position: absolute; left: 30px; top: -1px; bottom: 0; border-left: 1px dotted #555; }
.end .p-v { bottom: 8px; }
.p-h { position: absolute; left: 31px; width: 8px; top: 8px; border-top: 1px dotted #555; }
.p-in { display: flex; align-items: center; gap: 7px; height: 16px; padding: 0 3px; }
.p-in.on { background: #2d6cc4; width: 69px; box-sizing: border-box; }
.p-t { font: 11px/16px "Liberation Mono", monospace; letter-spacing: -0.6px; }
.sbar2 { margin-right: 0; }
.sbar2 .thumb { top: 330px; bottom: 18px; }

.props { width: 15px; height: 591px; margin: 29px 0 0 5px; flex: none; box-sizing: border-box; border-left: 1px solid #ccc; background: #f9f9f9; position: relative; overflow: hidden; }
.props-tab { position: absolute; left: 8px; top: 0; width: 16px; font-size: 13px; }
.props-box { margin: 24px 0 0 3px; border: 1px solid #aaa; border-right: 0; background: #fff; height: 560px; }
.pc { height: 18px; border-bottom: 1px solid #ccc; padding-left: 7px; font-size: 10px; background: #f4f4f4; line-height: 18px; overflow: hidden; }
.pc.head { height: 23px; }
.pc.on { background: #ffd597; }

.win {
  position: relative;
  width: 906px;
  height: 620px;
  flex: none;
  box-sizing: border-box;
  border: 1px solid #4a4a4a;
  border-top: 0;
  background: #dbe6f2;
  display: flex;
  flex-direction: column;
  padding: 0 6px 8px 7px;
}
.win-title {
  height: 27px;
  flex: none;
  margin: 0 -6px 0 -7px;
  padding-left: 7px;
  line-height: 35px;
  background: linear-gradient(#bdcbda, #d6e3f0);
  color: #a2a8ae;
}
.tabs {
  height: 23px;
  flex: none;
  display: flex;
  align-items: flex-end;
  background: #f7f8fa;
  border-bottom: 1px solid #d8d8d8;
  box-sizing: border-box;
}
.tab { height: 18px; width: 37px; padding-left: 3px; line-height: 18px; background: #efefef; border: 1px solid #d0d0d0; border-bottom: 0; box-sizing: border-box; }
.tab.active { height: 21px; width: 45px; padding-left: 6px; background: #fff; border-color: #e4e4e4; margin-bottom: -1px; line-height: 17px; }
.body { height: 534px; flex: none; background: #fff; padding: 4px 0 0 3px; box-sizing: border-box; display: flex; flex-direction: column; }
.bar1 { height: 25px; padding: 0 0 1px 4px; box-sizing: border-box; flex: none; background: #f6f6f6; display: flex; align-items: center; gap: 7px; white-space: nowrap; }
.grip { width: 2px; height: 16px; background: repeating-linear-gradient(#bbb 0 2px, transparent 2px 4px); }
.b1-i { display: flex; align-items: center; gap: 3px; }
.b1-i.off { color: #8d8d8d; }
.b1-i.first { margin-left: -1px; margin-right: 1px; }
.b1-i.wide { gap: 5px; }
.b1-i.lens { margin-left: -2px; }
.bar2 { height: 22px; margin-top: 4px; flex: none; display: flex; align-items: center; white-space: nowrap; }
.modes { width: 193px; height: 18px; flex: none; background: #efefef; display: flex; align-items: center; padding-left: 4px; box-sizing: border-box; }
.g2 { margin-right: 5px; }
.radio { width: 11px; height: 11px; box-sizing: border-box; border: 1px solid #777; border-radius: 50%; background: #f8f8f8; position: relative; }
.radio.on::after { content: ""; position: absolute; left: 1.5px; top: 1.5px; width: 6px; height: 6px; border-radius: 50%; background: #111; }
.m1 { margin: 0 11px 0 6px; }
.m2 { margin: 0 8px 0 9px; }
.m3 { margin-left: 8px; }
.v2 { height: 20px; margin: 0 0 0 3px; }
.lab { font: 12px/16px "Liberation Sans", sans-serif; }
.xl { margin-left: 2px; }
.spin {
  width: 78px;
  height: 23px;
  box-sizing: border-box;
  border: 1px solid #8c8c8c;
  background: #f4f4f4;
  color: #888;
  display: flex;
  align-items: center;
  justify-content: flex-end;
  padding-right: 4px;
  gap: 7px;
  font: 12px/16px "Liberation Sans", sans-serif;
}
.sx { margin-left: 9px; }
.sy { margin-left: 7px; }
.arrows { display: flex; flex-direction: column; gap: 6px; }
.up { width: 0; height: 0; border: 3px solid transparent; border-bottom: 3px solid #666; border-top: 0; }
.dn { width: 0; height: 0; border: 3px solid transparent; border-top: 3px solid #999; border-bottom: 0; }
.mm { margin-left: 6px; }
.yl { margin-left: 14px; }
.canvas { margin-top: 4px; background: #000; flex: none; }
.dim { font: 16px "Liberation Serif", serif; letter-spacing: .4px; fill: #19ff19; stroke: #19ff19; stroke-width: .3; }
.soft { font: 12px "Liberation Mono", monospace; fill: #b9b9b9; }
.dyn-row { flex: 1; padding: 2px 0 0 2px; }
.dyn { width: 57px; height: 22px; box-sizing: border-box; border: 1px solid #0a84d8; background: #dbe6f2; text-align: center; line-height: 20px; }
.coord {
  height: 21px;
  margin-top: 6px;
  flex: none;
  display: flex;
  align-items: center;
  background: linear-gradient(#fff, #eee);
  border-bottom: 1px solid #cfcfcf;
  white-space: nowrap;
  overflow: hidden;
}
.c-a { flex: none; margin-left: 1px; }
.c-b { width: 72px; overflow: hidden; flex: none; margin-left: 1px; font: 11.5px/16px "Liberation Sans", sans-serif; color: #333; }
.c-c { margin-left: 5px; }
.c-grip { margin-left: auto; margin-right: 2px; align-self: flex-end; }
.edge { flex: 1; background: #f6f6f6; display: flex; align-items: flex-end; padding: 0 0 10px 2px; box-sizing: border-box; height: 615px; }

.status { height: 22px; flex: none; display: flex; gap: 2px; background: #f0f0f0; }
.st { box-sizing: border-box; height: 20px; margin-top: 1px; background: linear-gradient(#f9f9f9, #f1f1f1); border: 1px solid #e2e2e2; line-height: 18px; padding-left: 2px; white-space: nowrap; }
.s0 { width: 148px; }
.s1 { width: 78px; }
.s2 { width: 98px; }
.s3 { width: 48px; }
.s4 { flex: 1; }

.taskbar { height: 40px; flex: none; display: flex; background: #03111a; color: #fff; position: relative; }
.start { width: 48px; background: #000; display: flex; align-items: center; justify-content: center; }
.tsearch { width: 344px; background: #343434; display: flex; align-items: center; padding-left: 11px; box-sizing: border-box; }
.ts-t { margin-left: 7px; font-size: 14px; color: #9c9c9c; }
.ts-m { margin-left: auto; margin-right: 15px; }
.apps { display: flex; align-items: center; padding-left: 2px; height: 40px; }
.app-i { display: flex; align-items: center; justify-content: center; height: 40px; width: 48px; position: relative; flex: none; }
.a-spiral { margin-left: 2px; }
.t-sep { width: 1px; height: 20px; background: #3a4650; margin: 0 15px 0 9px; }
.a-files { margin-left: 2px; }
.a-notes { margin-left: 1px; }
.a-main { background: #2e3a42; margin-left: 1px; }
.a-ie { margin-left: 2px; }
.a-main::after,
.a-g::after,
.a-ie::after,
.a-notes::after { content: ""; position: absolute; left: 0; right: 4px; bottom: 0; height: 2px; background: #76b9ed; }
.a-main::after { right: 0; }
.a-g::after { left: 5px; }
.a-ie::after { left: 4px; right: 4px; }
.tray { position: absolute; left: 1020px; top: 0; height: 40px; width: 346px; }
.cpu { position: absolute; left: 0; top: 0; width: 58px; display: flex; flex-direction: column; align-items: center; }
.cpu span, .clock span { display: block; height: 19px; line-height: 20px; }
.tr-up { position: absolute; left: 72px; top: 16px; }
.tr-bat { position: absolute; left: 94px; top: 14px; }
.tr-wifi { position: absolute; left: 120px; top: 13px; }
.tr-vol { position: absolute; left: 142px; top: 13px; }
.tr-zh { position: absolute; left: 167px; top: 11px; font-size: 13px; }
.tr-s { position: absolute; left: 194px; top: 12px; }
.clock { position: absolute; left: 222px; top: 0; width: 68px; display: flex; flex-direction: column; align-items: center; }
.notif { position: absolute; left: 305px; top: 11px; }
.badge { position: absolute; left: 7px; top: 7px; width: 15px; height: 15px; border-radius: 50%; background: #333; border: 1px solid #999; box-sizing: border-box; font: 700 11px/13px "Liberation Sans", sans-serif; text-align: center; color: #fff; }

.ime {
  position: absolute;
  left: 1181px;
  top: 704px;
  width: 183px;
  height: 24px;
  box-sizing: border-box;
  background: #fff;
  border: 1px solid #cfe2f3;
  border-bottom: 0;
  display: flex;
  align-items: center;
  gap: 8px;
}
.ime-s { margin: -3px 0 0 0; }
.ime-en { color: #1e78c8; font-weight: 700; font-size: 13px; margin-left: -3px; }
.ime-p { color: #1e78c8; font-weight: 700; width: 14px; }
.ime-17 { font: 700 7px "Liberation Sans", sans-serif; fill: #8fa0b0; }
.ime-tee { margin-left: -2px; }
.ime-key { margin-left: -2px; }

.badge71 {
  position: absolute;
  left: 205px;
  top: -26px;
  width: 43px;
  height: 43px;
  border-radius: 50%;
  background: radial-gradient(circle at 50% 80%, #63c46a, #3aa84a 70%);
  box-shadow: 0 1px 4px 1px rgba(0, 0, 0, 0.45);
  color: #fff;
  text-align: center;
}
.badge71 span { display: block; margin-top: 27px; font: 700 11px/14px "Liberation Sans", sans-serif; }

.dialog {
  position: absolute;
  left: 254px;
  top: 256px;
  width: 411px;
  height: 223px;
  box-sizing: border-box;
  border: 1px solid #1883d7;
  background: #efefef;
  display: flex;
  flex-direction: column;
}
.d-title { height: 25px; padding: 0 9px 3px 3px; box-sizing: border-box; flex: none; background: #fff; display: flex; align-items: center; justify-content: space-between; }
.d-body { flex: 1; padding: 0 13px; }
.fs { margin: 15px 0 0 0; padding: 0 10px 0 7px; border: 1px solid #dcdcdc; height: 65px; box-sizing: border-box; min-width: 0; }
.fs-two { margin-top: 7px; height: 66px; }
.fs-two .ta { margin-top: 2px; }
legend { padding: 0 1px 0 0; height: 16px; line-height: 16px; white-space: nowrap; }
.ta { height: 41px; margin-top: 1px; box-sizing: border-box; border: 1px solid #7c7c7c; background: #fff; padding: 0 2px; line-height: 16px; }
.hl { display: inline-block; background: #0078d7; color: #fff; line-height: 15px; height: 15px; }
.d-btns { display: flex; justify-content: flex-end; gap: 15px; margin: 12px 1px 0 0; }
.d-btn { width: 72px; height: 23px; box-sizing: border-box; border: 1px solid #adadad; background: #e1e1e1; text-align: center; line-height: 21px; }

.marks { position: absolute; left: 0; top: 0; pointer-events: none; }
</style>

<style>
body { margin: 0; }
.lat { font: 11px/16px "Liberation Mono", monospace; letter-spacing: -0.6px; }
</style>
